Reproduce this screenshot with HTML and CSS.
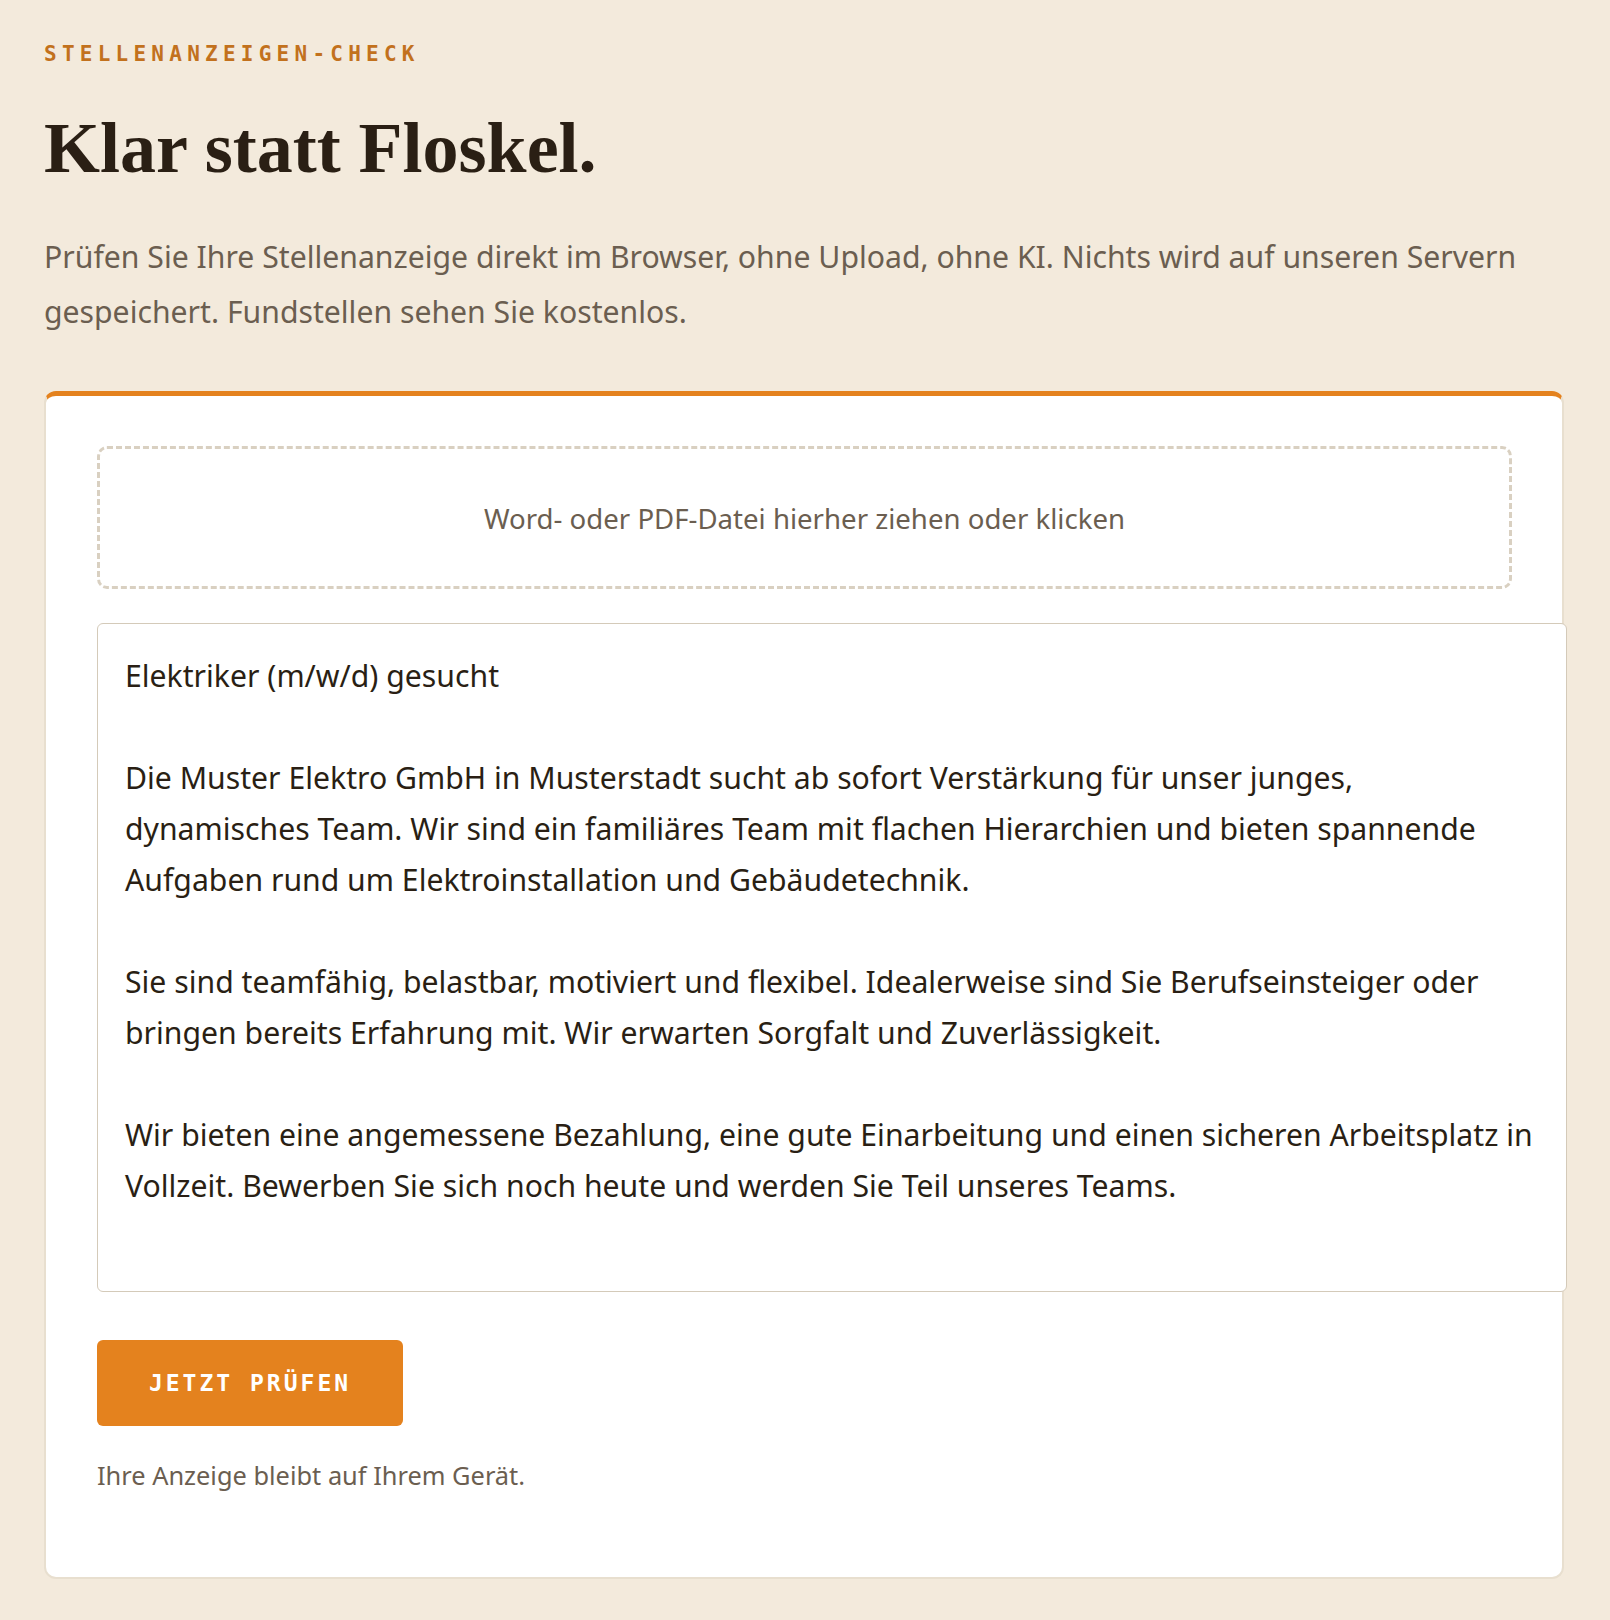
FILE: index.html
```html
<!DOCTYPE html>
<html lang="de">
<head>
<meta charset="UTF-8">
<meta name="viewport" content="width=device-width, initial-scale=1.0">
<title>Stellenanzeigen-Check</title>
<link rel="stylesheet" href="styles.css">
</head>
<body>

<main class="page">
  <p class="eyebrow">Stellenanzeigen-Check</p>
  <h1 class="title">Klar statt Floskel.</h1>
  <p class="lead">Prüfen Sie Ihre Stellenanzeige direkt im Browser, ohne Upload, ohne KI. Nichts wird auf unseren Servern gespeichert. Fundstellen sehen Sie kostenlos.</p>

  <section class="check-card">
    <!-- Drop zone for Word / PDF files -->
    <label class="dropzone">
      <span>Word- oder PDF-Datei hierher ziehen oder klicken</span>
      <input type="file" accept=".doc,.docx,.pdf" class="file-input">
    </label>

    <textarea class="ad-text" spellcheck="false">Elektriker (m/w/d) gesucht

Die Muster Elektro GmbH in Musterstadt sucht ab sofort Verstärkung für unser junges, dynamisches Team. Wir sind ein familiäres Team mit flachen Hierarchien und bieten spannende Aufgaben rund um Elektroinstallation und Gebäudetechnik.

Sie sind teamfähig, belastbar, motiviert und flexibel. Idealerweise sind Sie Berufseinsteiger oder bringen bereits Erfahrung mit. Wir erwarten Sorgfalt und Zuverlässigkeit.

Wir bieten eine angemessene Bezahlung, eine gute Einarbeitung und einen sicheren Arbeitsplatz in Vollzeit. Bewerben Sie sich noch heute und werden Sie Teil unseres Teams.</textarea>

    <button class="check-btn" type="button">Jetzt prüfen</button>
    <p class="note">Ihre Anzeige bleibt auf Ihrem Gerät.</p>
  </section>
</main>

</body>
</html>
```

FILE: styles.css
```css
/* General Styling */
body {
  margin: 0;
  background-color: #f3eadc; /* warm paper */
  color: #2a1f14;
  font-family: "Noto Sans", "Open Sans", sans-serif;
}

.page {
  padding: 42px 46px 44px 44px;
}

.eyebrow {
  margin: 0;
  font-family: "DejaVu Sans Mono", "Liberation Mono", monospace;
  font-weight: 700;
  font-size: 21px;
  letter-spacing: 0.25em;
  text-transform: uppercase;
  color: #c2711d;
}

.title {
  margin: 39px 0 0;
  font-family: "Liberation Serif", serif;
  font-weight: 700;
  font-size: 72px;
  line-height: 1.2;
  color: #2a1f14;
}

.lead {
  margin: 38px 0 0;
  font-size: 30.2px;
  line-height: 55px;
  color: #6b5e50;
}

/* Card with the checker */
.check-card {
  margin-top: 52px;
  background-color: #fff;
  border: 2px solid #e8dfcf;
  border-top: 5px solid #e4821e;
  border-radius: 12px;
  padding: 50px 50px 50px 51px;
}

.dropzone {
  display: flex;
  align-items: center;
  justify-content: center;
  height: 137px;
  border: 3px dashed #d9d0c1;
  border-radius: 10px;
  font-size: 27.6px;
  color: #6b5e50;
  cursor: pointer;
}

.file-input {
  display: none;
}

.ad-text {
  display: block;
  width: 100%; /* no border-box here, so it runs a bit past the card */
  height: 615px;
  margin-top: 34px;
  padding: 26px 26px 26px 27px;
  border: 1.5px solid #d4cab9;
  border-radius: 6px;
  font-family: "Noto Sans", "Open Sans", sans-serif;
  font-size: 30.2px;
  line-height: 51px;
  color: #2a1f14;
  resize: none;
  outline: none;
}

.check-btn {
  display: block;
  margin-top: 48px;
  width: 306px;
  height: 86px;
  background-color: #e4821e;
  color: #fff;
  border: none;
  border-radius: 6px;
  font-family: "DejaVu Sans Mono", "Liberation Mono", monospace;
  font-weight: 700;
  font-size: 23px;
  letter-spacing: 3px;
  text-transform: uppercase;
  cursor: pointer;
}

.note {
  margin: 30px 0 32px;
  font-size: 25.4px;
  line-height: 1.5;
  color: #6b5e50;
}
```
